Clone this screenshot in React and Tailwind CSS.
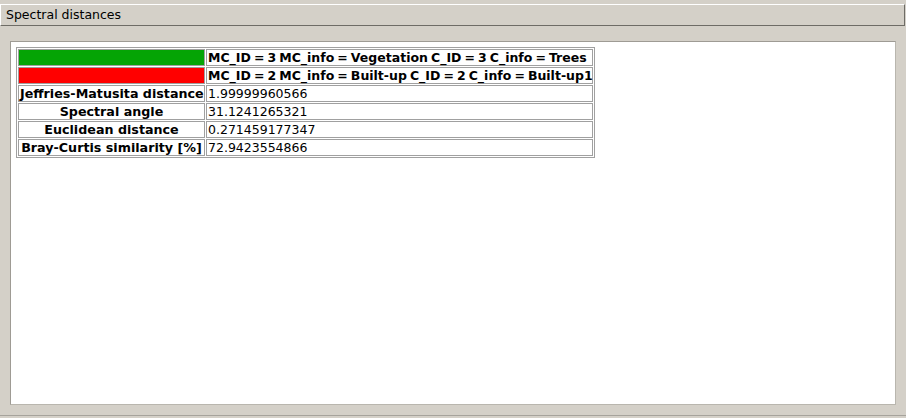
export default function App() {
  const rows = [
    { label: "Jeffries-Matusita distance", value: "1.99999960566" },
    { label: "Spectral angle", value: "31.1241265321" },
    { label: "Euclidean distance", value: "0.271459177347" },
    { label: "Bray-Curtis similarity [%]", value: "72.9423554866" },
  ];

  return (
    <div
      className="w-[906px] h-[418px] bg-[#d4d0c8] pt-[4px] text-black overflow-hidden"
      style={{ fontFamily: '"DejaVu Sans", sans-serif' }}
    >
      {/* Title bar */}
      <div className="h-[22px] mr-[1px] border-t border-l border-t-white border-l-white border-b border-r border-b-[#6e6c66] border-r-[#6e6c66] flex items-center pl-[5px] text-[12.5px] leading-none">
        Spectral distances
      </div>

      {/* Content panel */}
      <div className="mt-[15px] mx-[10px] h-[364px] border border-t-[#9e9b94] border-l-[#9e9b94] border-b-[#b9b6ae] border-r-[#b9b6ae] bg-white pt-[5px] pl-[5px]">
        <table className="border border-[#a0a0a0] border-separate border-spacing-[1px] table-fixed w-[579px] text-[12.5px] leading-[15px]">
          <colgroup>
            <col className="w-[187px]" />
            <col className="w-[387px]" />
          </colgroup>
          <tbody>
            <tr>
              <td className="border border-[#a0a0a0] p-0 h-[17px]">
                <div className="h-[15px] bg-[#05a405]" />
              </td>
              <td className="border border-[#a0a0a0] px-[1px] font-bold whitespace-nowrap [word-spacing:-1.3px]">
                MC_ID = 3 MC_info = Vegetation C_ID = 3 C_info = Trees
              </td>
            </tr>
            <tr>
              <td className="border border-[#a0a0a0] p-0 h-[17px]">
                <div className="h-[15px] bg-[#ff0000]" />
              </td>
              <td className="border border-[#a0a0a0] px-[1px] font-bold whitespace-nowrap [word-spacing:-1.3px]">
                MC_ID = 2 MC_info = Built-up C_ID = 2 C_info = Built-up1
              </td>
            </tr>
            {rows.map((r) => (
              <tr key={r.label}>
                <td className="border border-[#a0a0a0] px-[1px] h-[17px] font-bold text-center whitespace-nowrap text-[12.7px]">
                  {r.label}
                </td>
                <td className="border border-[#a0a0a0] px-[1px] whitespace-nowrap">
                  {r.value}
                </td>
              </tr>
            ))}
          </tbody>
        </table>
      </div>

      {/* bottom edge */}
      <div className="mt-[10px] border-b border-b-[#a6a39c]" />
    </div>
  );
}
